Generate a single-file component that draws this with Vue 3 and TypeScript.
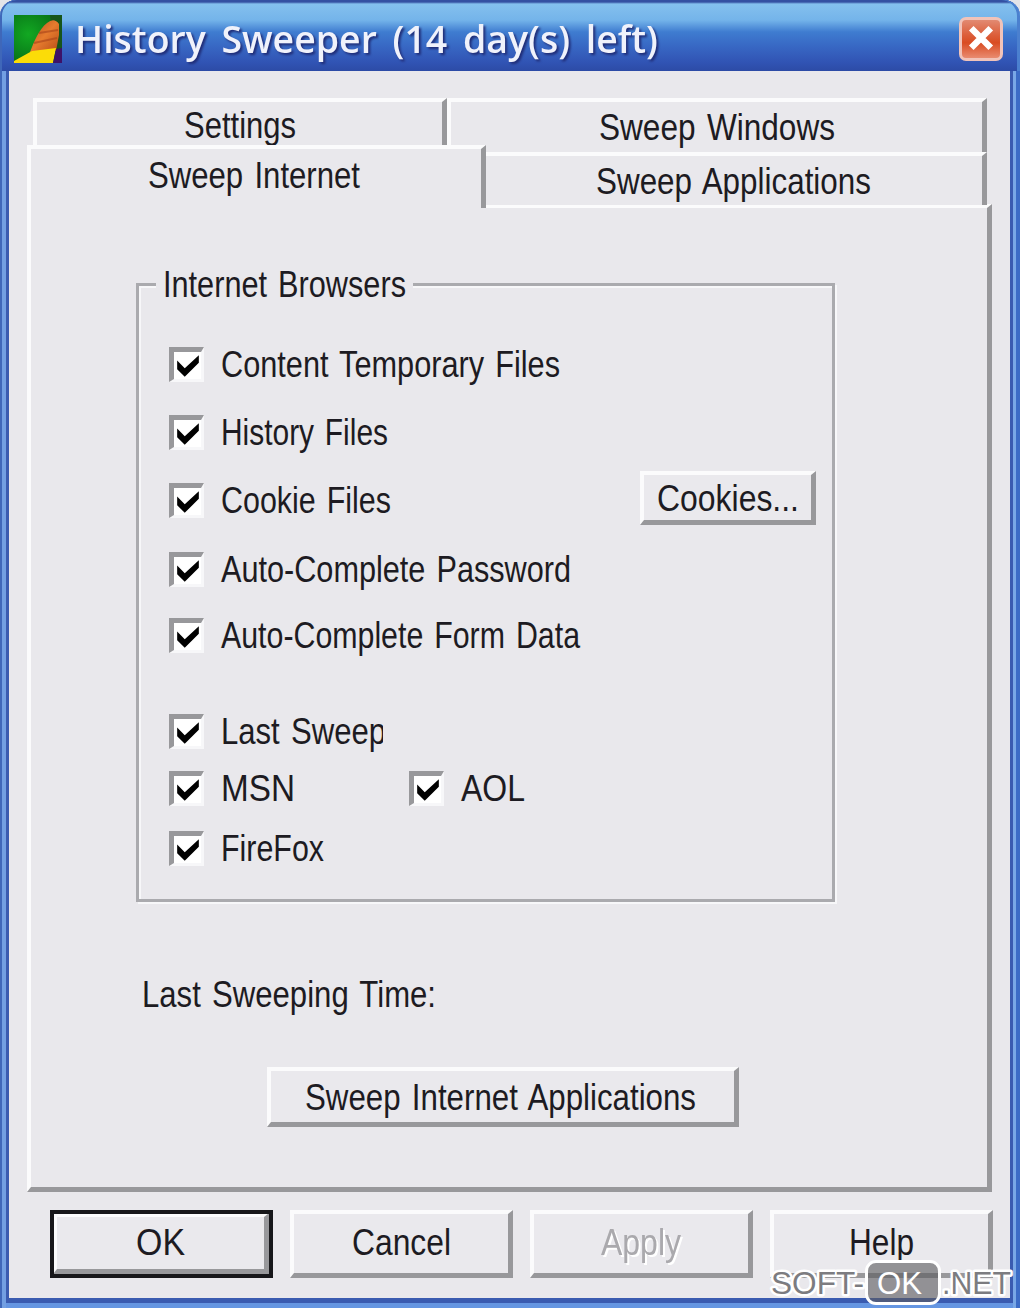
<template>
  <div class="window">
    <header class="title-bar">
      <svg class="app-icon" width="48" height="48" viewBox="0 0 48 48">
        <defs>
          <radialGradient id="icon-green" cx="0.3" cy="0.4" r="0.8">
            <stop offset="0" stop-color="#12a822" />
            <stop offset="1" stop-color="#056414" />
          </radialGradient>
          <linearGradient id="icon-broom" x1="0" y1="0" x2="1" y2="1">
            <stop offset="0" stop-color="#b54e1c" />
            <stop offset="0.5" stop-color="#e67c2e" />
            <stop offset="1" stop-color="#b84c18" />
          </linearGradient>
        </defs>
        <rect width="48" height="48" fill="url(#icon-green)" />
        <path d="M36 0H48V34H40Z" fill="#17551a" />
        <path d="M16 37C20 27 25 14 33 8Q40 2 45 9L45 20L42 36Z" fill="url(#icon-broom)" />
        <path d="M25 18L44 15M20 28L43 23" stroke="#a8431a" stroke-width="2" opacity="0.6" />
        <path d="M0 46L18 36L42 33L39 48H0Z" fill="#fbdc08" />
        <path d="M42 34L48 33V48H39Z" fill="#3d1268" />
      </svg>
      <Caption class="title" text="History Sweeper (14 day(s) left)" :width="583" />
      <button class="close" aria-label="Close">
        <svg width="26" height="26" viewBox="0 0 24 24">
          <path d="M3 3L21 21M21 3L3 21" stroke="#fff" stroke-width="6" />
        </svg>
      </button>
    </header>

    <main class="body">
      <nav class="tabs">
        <div class="tab-row back">
          <div class="tab settings"><Caption text="Settings" :width="112" /></div>
          <div class="tab windows"><Caption text="Sweep Windows" :width="236" /></div>
        </div>
        <div class="tab-row front">
          <div class="tab active"><Caption text="Sweep Internet" :width="212" /></div>
          <div class="tab applications"><Caption text="Sweep Applications" :width="275" /></div>
        </div>
      </nav>

      <section class="panel">
        <fieldset class="group">
          <legend><Caption text="Internet Browsers" :width="243" /></legend>
          <div class="options">
            <div v-for="(row, index) in rows" :key="index" class="option-row">
              <label v-for="option in row" :key="option.text" class="option">
                <span class="check-box" @click="option.checked = !option.checked">
                  <svg v-if="option.checked" width="26" height="26" viewBox="0 0 24 24">
                    <path d="M2 7L9 14L22 2V9L9 22L2 15Z" fill="#000" />
                  </svg>
                </span>
                <Caption :class="{ clipped: option.clipped }" :text="option.text" :width="option.width" />
              </label>
              <button v-if="index === 2" class="button cookies">
                <Caption text="Cookies..." :width="142" />
              </button>
            </div>
          </div>
        </fieldset>

        <Caption class="last-time" text="Last Sweeping Time:" :width="294" />
        <button class="button sweep"><Caption text="Sweep Internet Applications" :width="391" /></button>
      </section>

      <footer class="actions">
        <button
          v-for="action in actions"
          :key="action.text"
          class="button"
          :class="action.kind"
          :disabled="action.kind === 'disabled'"
        >
          <Caption :text="action.text" :width="action.width" />
        </button>
      </footer>
    </main>

    <div class="watermark">
      <Caption text="SOFT-" :width="93" />
      <span class="badge"><Caption text="OK" :width="45" /></span>
      <Caption text=".NET" :width="69" />
    </div>
  </div>
</template>

<script setup lang="ts">
import { h, reactive } from 'vue'

interface Option {
  text: string
  width: number
  checked: boolean
  clipped?: boolean
}

// Single line of text fitted to a fixed width, baseline 30px below its top
function Caption(props: { text: string; width: number }) {
  return h('svg', { class: 'caption', width: props.width, height: 40 }, [
    h('text', { x: 0, y: 30, textLength: props.width, lengthAdjust: 'spacingAndGlyphs' }, props.text),
  ])
}
Caption.props = ['text', 'width']

const rows = reactive<Option[][]>([
  [{ text: 'Content Temporary Files', width: 339, checked: true }],
  [{ text: 'History Files', width: 167, checked: true }],
  [{ text: 'Cookie Files', width: 170, checked: true }],
  [{ text: 'Auto-Complete Password', width: 350, checked: true }],
  [{ text: 'Auto-Complete Form Data', width: 359, checked: true }],
  [{ text: 'Last Sweep', width: 165, checked: true, clipped: true }],
  [
    { text: 'MSN', width: 74, checked: true },
    { text: 'AOL', width: 64, checked: true },
  ],
  [{ text: 'FireFox', width: 103, checked: true }],
])

const actions = [
  { text: 'OK', width: 49, kind: 'default' },
  { text: 'Cancel', width: 99, kind: '' },
  { text: 'Apply', width: 80, kind: 'disabled' },
  { text: 'Help', width: 65, kind: '' },
]
</script>

<style>
body {
  margin: 0;
  background: #e4e4e8;
}
</style>

<style scoped>
.window {
  position: relative;
  box-sizing: border-box;
  width: 1020px;
  height: 1308px;
  padding: 0 10px 10px 9px;
  overflow: hidden;
  border-radius: 16px 16px 0 0;
  background: #3a5bb0;
  box-shadow: inset 2px 0 #3f67b9, inset 6px 0 #729fe2, inset -4px 0 #3c6cc6, inset -7px 0 #79a8e6,
    inset 0 -5px #6596e2;
  font-family: "Liberation Sans", Arial, sans-serif;
  font-size: 36px;
}

.caption {
  display: block;
  flex: none;
  overflow: visible;
  fill: #1d1b22;
  word-spacing: 3px;
}

.title-bar {
  display: flex;
  align-items: flex-start;
  box-sizing: border-box;
  height: 71px;
  margin: 0 -10px 0 -9px;
  padding: 15px 17px 0 14px;
  border-radius: 16px 16px 0 0;
  background: linear-gradient(#3450a2 0, #3450a2 2px, #84c0ee 4px, #74b4ea 20px, #3f7cd0 32px, #3868c4 46px, #3154b4 62px, #2c4ba6 71px);
  box-shadow: inset 2px 0 #3f67b9, inset -3px 0 #4b80cf;
}

.title {
  margin: 8px auto 0 13px;
  fill: #f0f2fb;
  font-family: "Open Sans", "Noto Sans", sans-serif;
  font-size: 38px;
  font-weight: 600;
  word-spacing: 6px;
  filter: drop-shadow(2px 2px 1px #202d77);
}

.close {
  display: flex;
  align-items: center;
  justify-content: center;
  width: 44px;
  height: 44px;
  margin-top: 2px;
  padding: 0 0 3px;
  border: 3px solid #f1c3b9;
  border-radius: 7px;
  background: linear-gradient(#e28a72, #dc5e3a 40%, #d94c22 60%, #e98b70);
}

.body {
  box-sizing: border-box;
  height: 1227px;
  padding: 27px 18px 0;
  background: #e9e8ec;
}

.tab-row {
  display: flex;
  align-items: flex-start;
}

.tab {
  display: flex;
  justify-content: center;
  box-sizing: border-box;
  border: solid;
  border-width: 4px 5px 0 4px;
  border-color: #fbfbfc #98989b transparent #fbfbfc;
  background: #e9e8ec;
}

.back {
  padding-left: 6px;
}

.settings {
  width: 414px;
  height: 47px;
  padding-top: 6px;
}

.windows {
  width: 540px;
  height: 54px;
  padding-top: 8px;
}

.front {
  margin-top: -7px;
}

.active {
  position: relative;
  z-index: 1;
  width: 459px;
  height: 63px;
  padding: 9px 4px 0 0;
}

.applications {
  width: 501px;
  height: 53px;
  margin-top: 7px;
  padding: 8px 2px 0 0;
  border-left: 0;
}

.panel {
  box-sizing: border-box;
  width: 965px;
  height: 988px;
  margin-top: -4px;
  padding: 56px 0 0 105px;
  border: solid;
  border-width: 4px 5px 5px 4px;
  border-color: #fbfbfc #98989b #98989b #fbfbfc;
}

.group {
  box-sizing: border-box;
  width: 699px;
  height: 638px;
  min-width: 0;
  margin: 0;
  padding: 0 16px 0 30px;
  border: 3px solid #aaaaae;
  box-shadow: 2px 2px #f7f7f9, inset 2px 2px #f7f7f9;
}

.group legend {
  margin-left: -13px;
  padding: 0 7px;
  background: #e9e8ec;
}

.group legend .caption {
  margin: 3px 0 -3px;
}

.options {
  display: grid;
  grid-template-rows: 68px 68px 69px 66px 96px 57px 60px 40px;
  padding-top: 43px;
}

.option-row,
.option {
  display: flex;
  align-items: flex-start;
}

.option {
  gap: 17px;
}

.option + .option {
  margin-left: 114px;
}

.check-box {
  display: flex;
  align-items: center;
  justify-content: center;
  box-sizing: border-box;
  width: 35px;
  height: 35px;
  border: solid;
  border-width: 5px 3px 3px 5px;
  border-color: #98989b #f7f7f9 #f7f7f9 #98989b;
  background: #fff;
}

.clipped {
  width: 162px;
  height: 38px;
  overflow: hidden;
}

.button {
  display: flex;
  align-items: center;
  justify-content: center;
  box-sizing: border-box;
  height: 68px;
  padding: 0;
  border: solid;
  border-width: 4px 5px 5px 4px;
  border-color: #fbfbfc #98989b #98989b #fbfbfc;
  background: #eae9ed;
  font: inherit;
}

.cookies {
  width: 176px;
  height: 54px;
  margin: -12px 0 0 auto;
}

.cookies .caption {
  margin-top: 6px;
}

.last-time {
  margin: 75px 0 0 6px;
}

.sweep {
  width: 472px;
  height: 60px;
  margin: 50px 0 0 131px;
}

.sweep .caption {
  margin: 6px 4px 0 0;
}

.actions {
  display: grid;
  grid-template-columns: repeat(4, 223px);
  gap: 17px;
  padding: 18px 0 0 23px;
}

.actions .caption {
  margin-top: 3px;
}

.default {
  outline: 4px solid #17171a;
  outline-offset: -4px;
  border-width: 7px 9px 9px 7px;
}

.disabled .caption {
  fill: #aaa9ad;
  filter: drop-shadow(2px 2px 0 #fff);
}

/* site mark over the lower right corner */
.watermark {
  position: absolute;
  right: 9px;
  bottom: 3px;
  display: flex;
  align-items: center;
  font-size: 31px;
}

.watermark .caption {
  margin-top: 2px;
  fill: #7c7c80;
  stroke: #fff;
  stroke-width: 5px;
  stroke-linejoin: round;
  paint-order: stroke;
}

.badge {
  box-sizing: border-box;
  width: 76px;
  height: 45px;
  margin: 0 1px;
  padding-left: 9px;
  border: 3px solid #fff;
  border-radius: 11px;
  background: rgba(92, 92, 96, 0.62);
}

.watermark .badge .caption {
  margin-top: 1px;
  fill: #fff;
  stroke: none;
}
</style>
